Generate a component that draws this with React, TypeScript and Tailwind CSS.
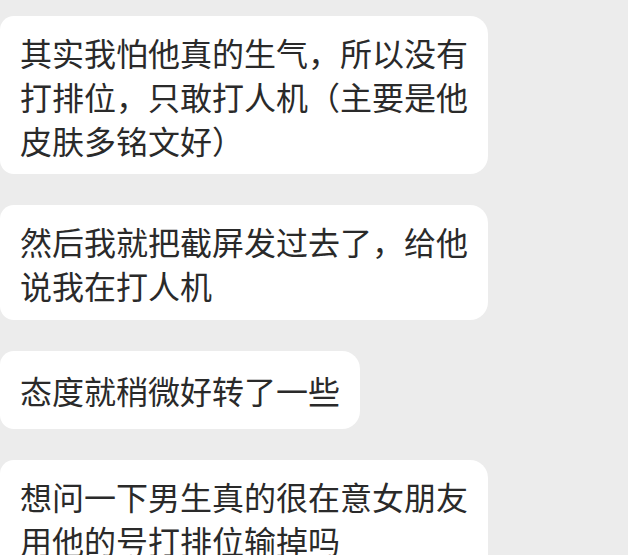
const MESSAGES = [
  { text: "其实我怕他真的生气，所以没有打排位，只敢打人机（主要是他皮肤多铭文好）", pad: "pt-[14px] pb-[12px]" },
  { text: "然后我就把截屏发过去了，给他说我在打人机", pad: "pt-[14px] pb-[13px]" },
  { text: "态度就稍微好转了一些", pad: "pt-[17px] pb-[17px]" },
  { text: "想问一下男生真的很在意女朋友用他的号打排位输掉吗", pad: "pt-[14px] pb-[14px]" },
]

export default function App() {
  return (
    <div className="h-[555px] w-[628px] overflow-hidden bg-[#ececec] pt-[16px] font-['Noto_Sans_CJK_SC','Noto_Sans',sans-serif]">
      <div className="flex flex-col items-start gap-[31px]">
        {MESSAGES.map((m) => (
          <div
            key={m.text}
            className={`max-w-[488px] rounded-r-[18px] rounded-l-[14px] bg-white px-[20px] ${m.pad} text-[32px] leading-[44px] text-[#2a2a2a]`}
          >
            {m.text}
          </div>
        ))}
      </div>
    </div>
  )
}
